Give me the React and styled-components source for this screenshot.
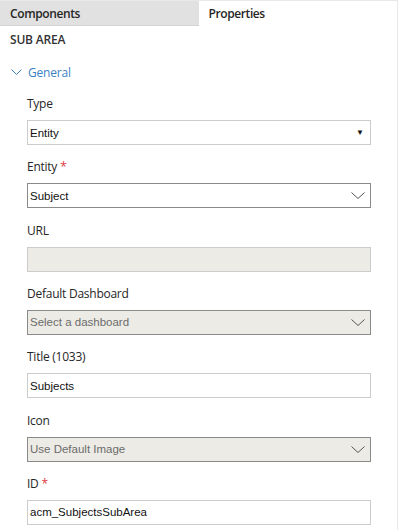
import React from "react";
import styled, { createGlobalStyle } from "styled-components";

const GlobalStyle = createGlobalStyle`
  html, body {
    margin: 0;
    padding: 0;
    background: #ffffff;
  }
  body {
    font-family: "Open Sans", "Noto Sans", sans-serif;
  }
`;

const Panel = styled.div`
  width: 398px;
  height: 530px;
  box-sizing: border-box;
  border-top: 1px solid #e8e8e8;
  border-right: 1px solid #e8e8e8;
  background: #fff;
  overflow: hidden;
`;

const Tabs = styled.div`
  display: flex;
  height: 25px;
`;

const Tab = styled.div`
  width: 200px;
  box-sizing: border-box;
  padding: 0 11px 0 10px;
  display: flex;
  align-items: center;
  font-size: 12px;
  letter-spacing: -0.4px;
  font-weight: 600;
  color: #262626;
  background: ${(p) => (p.active ? "#ffffff" : "#e1e1e1")};
  border-bottom: 1px solid ${(p) => (p.active ? "transparent" : "#d4d4d4")};
`;

const SectionTitle = styled.div`
  padding: 0 10px;
  margin-top: 6px;
  height: 16px;
  line-height: 16px;
  font-size: 12px;
  letter-spacing: -0.2px;
  font-weight: 600;
  color: #333;
`;

const Group = styled.div`
  display: flex;
  align-items: center;
  gap: 6px;
  padding: 0 11px;
  margin-top: 16px;
  height: 16px;
  font-size: 12px;
  letter-spacing: -0.2px;
  color: #3b82c4;
`;

const Fields = styled.div`
  display: flex;
  flex-direction: column;
  gap: 13.33px;
  padding: 15px 0 0 27px;
  width: 344px;
`;

const Field = styled.div`
  display: flex;
  flex-direction: column;
  gap: 8px;
`;

const Label = styled.div`
  height: 17px;
  line-height: 17px;
  font-size: 12px;
  letter-spacing: -0.25px;
  color: #262626;
`;

const Required = styled.span`
  color: #e0383e;
  margin-left: 3px;
`;

const Box = styled.div`
  height: 25px;
  box-sizing: border-box;
  display: flex;
  align-items: center;
  justify-content: space-between;
  padding: 0 5px 0 2px;
  font-family: "Liberation Sans", Arial, sans-serif;
  font-size: 11.5px;
  color: ${(p) => (p.muted ? "#6b6b6b" : "#111")};
  background: ${(p) => (p.disabled ? "#edebe6" : "#ffffff")};
  border: 1px solid ${(p) => (p.dark ? "#8a8a8a" : "#cccccc")};
`;

const Triangle = styled.span`
  font-size: 8px;
  color: #111;
  margin-right: 1px;
`;

const Chevron = ({ color = "#555", w = 14, h = 7 }) => (
  <svg width={w} height={h} viewBox={`0 0 ${w} ${h}`} fill="none">
    <path
      d={`M0.5 0.5 L${w / 2} ${h - 0.5} L${w - 0.5} 0.5`}
      stroke={color}
      strokeWidth="1"
    />
  </svg>
);

const fields = [
  { label: "Type", value: "Entity", type: "native" },
  { label: "Entity", required: true, value: "Subject", type: "select", dark: true },
  { label: "URL", value: "", disabled: true },
  {
    label: "Default Dashboard",
    value: "Select a dashboard",
    type: "select",
    dark: true,
    disabled: true,
    muted: true,
  },
  { label: "Title (1033)", value: "Subjects" },
  {
    label: "Icon",
    value: "Use Default Image",
    type: "select",
    dark: true,
    disabled: true,
    muted: true,
  },
  { label: "ID", required: true, value: "acm_SubjectsSubArea" },
];

const App = () => {
  return (
    <>
      <GlobalStyle />
      <Panel>
        <Tabs>
          <Tab>Components</Tab>
          <Tab active>Properties</Tab>
        </Tabs>
        <SectionTitle>SUB AREA</SectionTitle>
        <Group>
          <Chevron color="#3b82c4" w={11} h={6} />
          General
        </Group>
        <Fields>
          {fields.map((f) => (
            <Field key={f.label}>
              <Label>
                {f.label}
                {f.required && <Required>*</Required>}
              </Label>
              <Box dark={f.dark} disabled={f.disabled} muted={f.muted}>
                <span>{f.value}</span>
                {f.type === "native" && <Triangle>▼</Triangle>}
                {f.type === "select" && <Chevron />}
              </Box>
            </Field>
          ))}
        </Fields>
      </Panel>
    </>
  );
};

export default App;
